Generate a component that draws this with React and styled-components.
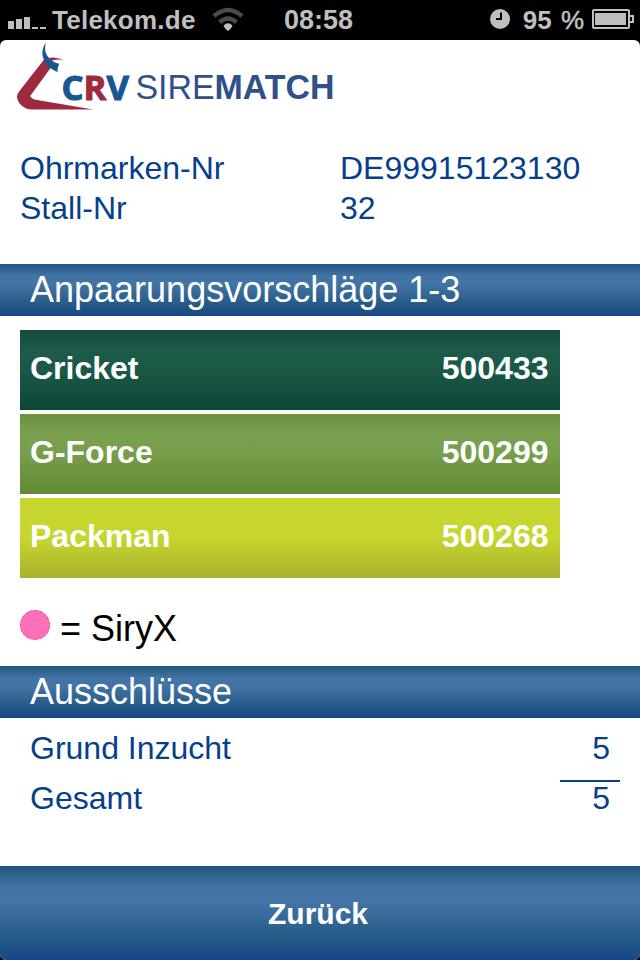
import React from 'react';
import styled, { createGlobalStyle } from 'styled-components';

const GlobalStyle = createGlobalStyle`
  * {
    box-sizing: border-box;
  }

  body {
    margin: 0;
    background: #000;
    font-family: 'Liberation Sans', Arial, sans-serif;
  }
`;

const Screen = styled.div`
  width: 640px;
  height: 960px;
  display: flex;
  flex-direction: column;
  background: #000;
  overflow: hidden;
`;

const StatusBar = styled.div`
  display: grid;
  grid-template-columns: 276px 1fr auto;
  align-items: center;
  height: 40px;
  padding: 0 6px 2px 8px;
  color: #bfbfbf;
  font-weight: bold;
  white-space: nowrap;
`;

const StatusGroup = styled.div`
  display: flex;
  align-items: center;
`;

const Carrier = styled.span`
  margin: 2px 16px 0 6px;
  font-size: 26px;
  letter-spacing: 0.25px;
`;

const Clock = styled.span`
  padding-top: 3px;
  font-size: 27px;
`;

const BatteryLevel = styled.span`
  margin: 3px 8px 0 13px;
  font-size: 26px;
  word-spacing: 2px;
`;

const Percent = styled.span`
  font-weight: normal;
  -webkit-text-stroke: 0.5px #bfbfbf;
`;

const Page = styled.main`
  flex: 1;
  display: flex;
  flex-direction: column;
  background: #fff;
  border-radius: 6px;
  overflow: hidden;
`;

const Header = styled.header`
  height: 108px;
`;

const Logo = styled.svg`
  display: block;
`;

const Details = styled.dl`
  display: grid;
  grid-template-columns: 320px 1fr;
  height: 116px;
  margin: 0;
  padding-left: 20px;
  grid-auto-rows: 40px;
  color: #053f8c;
  font-size: 32px;
  line-height: 40px;

  dt,
  dd {
    margin: 0;
  }
`;

const blueGradient = `linear-gradient(
  #225580 0%,
  #4174a4 22%,
  #4275a5 38%,
  #235784 80%,
  #17468a 100%
)`;

const SectionTitle = styled.h2`
  height: 52px;
  margin: 0;
  padding-left: 30px;
  background: ${blueGradient};
  color: #fff;
  font-size: 36px;
  font-weight: normal;
  line-height: 51px;
`;

const BullList = styled.div`
  display: flex;
  flex-direction: column;
  gap: 4px;
  width: 560px;
  padding: 14px 0 0 20px;
`;

const BullRow = styled.div`
  display: flex;
  justify-content: space-between;
  height: 80px;
  padding: 0 11.5px 0 10px;
  background: linear-gradient(${({ $stops }) => $stops});
  color: #fff;
  font-size: 32px;
  font-weight: bold;
  line-height: 76px;
`;

const Legend = styled.div`
  display: flex;
  align-items: center;
  gap: 10px;
  height: 88px;
  padding: 13px 0 0 20px;
  color: #000;
  font-size: 36px;
`;

const LegendDot = styled.span`
  width: 30px;
  height: 30px;
  margin-bottom: 7px;
  border: 1px dashed #e8488c;
  border-radius: 50%;
  background: #ff70ba;
`;

const Exclusions = styled.div`
  flex: 1;
  padding: 5px 20px 0 30px;
  color: #053f8c;
  font-size: 32px;
`;

const ExclusionRow = styled.div`
  display: flex;
  align-items: flex-end;
  justify-content: space-between;
  height: 50px;
  line-height: 50px;
`;

const Count = styled.span`
  width: 60px;
  height: ${({ $total }) => ($total ? '43px' : '50px')};
  padding-right: 10px;
  border-top: ${({ $total }) => ($total ? '2px solid #053f8c' : 'none')};
  line-height: ${({ $total }) => ($total ? '32px' : '50px')};
  text-align: right;
`;

const BackButton = styled.button`
  height: 94px;
  padding: 2px 4px 0 0;
  border: none;
  background: ${blueGradient};
  color: #fff;
  font-family: inherit;
  font-size: 30px;
  font-weight: bold;
`;

const bulls = [
  { name: 'Cricket', number: '500433', stops: '#124c3c, #1c5b49 25%, #1b5947 50%, #0b4636' },
  { name: 'G-Force', number: '500299', stops: '#6b9240, #7ba050 25%, #789d4c 50%, #608a33' },
  { name: 'Packman', number: '500268', stops: '#c5d52d, #c7d730 25%, #c6d62e 50%, #a8b12d' },
];

const exclusions = [
  { label: 'Grund Inzucht', count: 5 },
  { label: 'Gesamt', count: 5, total: true },
];

function SignalIcon() {
  return (
    <svg width="38" height="20" viewBox="0 0 38 20" fill="#bfbfbf">
      <rect x="0" y="12" width="6" height="8" />
      <rect x="8" y="10" width="6" height="10" />
      <rect x="16" y="8" width="6" height="12" />
      <rect x="24" y="18" width="6" height="2" />
      <rect x="32" y="18" width="6" height="2" />
    </svg>
  );
}

function WifiIcon() {
  return (
    <svg width="32" height="24" viewBox="0 0 32 24" fill="none" strokeWidth="4.4">
      <path d="M2 9.2Q16 -3.2 30 9.2" stroke="#4b4b4b" />
      <path d="M7.6 15.4Q16 7.6 24.4 15.4" stroke="#4b4b4b" />
      <path d="M11.6 18.6Q16 14 20.4 18.6Q20.4 20.4 16.8 23.4Q16 24 15.2 23.4Q11.6 20.4 11.6 18.6Z" fill="#bfbfbf" />
    </svg>
  );
}

function AlarmIcon() {
  return (
    <svg width="20" height="20" viewBox="0 0 20 20">
      <circle cx="10" cy="10" r="10" fill="#bfbfbf" />
      <path d="M11 3.5V10H6" fill="none" stroke="#000" strokeWidth="2" />
    </svg>
  );
}

function BatteryIcon() {
  return (
    <svg width="42" height="20" viewBox="0 0 42 20">
      <rect x="1" y="1" width="36" height="18" rx="1" fill="none" stroke="#bfbfbf" strokeWidth="2" />
      <rect x="3" y="4" width="31" height="12" fill="#bfbfbf" />
      <path d="M38 7H41V13H38" fill="none" stroke="#bfbfbf" strokeWidth="2" />
    </svg>
  );
}

function CrvLogo() {
  return (
    <Logo width="350" height="76" viewBox="0 40 350 76">
      <path
        d="M43.5 60.2C48 57 56 56 63.3 60.4C58 58.8 54 59.4 50 61.5L52 66L30.2 96C31.5 98.5 33.5 99.4 37 100L93.3 109.5H32C24 109.5 17 103 17 96.5C17 94 19 91.5 21 89Z"
        fill="#9e2a40"
      />
      <path
        d="M45.8 42.8C42 48 41.4 54.5 44 60C46.5 65.5 51 69.5 57.6 72C57.4 69 58.2 66 59.3 63.8C54 63 49.8 59.5 47.2 55.8C44.8 52 44.6 47.5 45.8 42.8Z"
        fill="#195793"
      />
      <text
        x="61.5"
        y="100"
        textLength="67.5"
        lengthAdjust="spacingAndGlyphs"
        fontFamily="'Open Sans', 'Noto Sans', sans-serif"
        fontSize="34.5"
        fontWeight="700"
        stroke="#195793"
        strokeWidth="1"
        fill="#195793"
      >
        C<tspan fill="#9e2a40" stroke="#9e2a40">R</tspan>V
      </text>
      <text
        x="135.5"
        y="99.3"
        textLength="199"
        lengthAdjust="spacingAndGlyphs"
        fontFamily="'Liberation Sans', Arial, sans-serif"
        fontSize="35.5"
        fill="#30508a"
      >
        SIRE<tspan fontWeight="bold">MATCH</tspan>
      </text>
    </Logo>
  );
}

function App() {
  return (
    <Screen>
      <GlobalStyle />
      <StatusBar>
        <StatusGroup>
          <SignalIcon />
          <Carrier>Telekom.de</Carrier>
          <WifiIcon />
        </StatusGroup>
        <Clock>08:58</Clock>
        <StatusGroup>
          <AlarmIcon />
          <BatteryLevel>
            95 <Percent>%</Percent>
          </BatteryLevel>
          <BatteryIcon />
        </StatusGroup>
      </StatusBar>
      <Page>
        <Header>
          <CrvLogo />
        </Header>
        <Details>
          <dt>Ohrmarken-Nr</dt>
          <dd>DE99915123130</dd>
          <dt>Stall-Nr</dt>
          <dd>32</dd>
        </Details>
        <SectionTitle>Anpaarungsvorschläge 1-3</SectionTitle>
        <BullList>
          {bulls.map((bull) => (
            <BullRow key={bull.number} $stops={bull.stops}>
              <span>{bull.name}</span>
              <span>{bull.number}</span>
            </BullRow>
          ))}
        </BullList>
        <Legend>
          <LegendDot />
          <span>= SiryX</span>
        </Legend>
        <SectionTitle>Ausschlüsse</SectionTitle>
        <Exclusions>
          {exclusions.map((row) => (
            <ExclusionRow key={row.label}>
              <span>{row.label}</span>
              <Count $total={row.total}>{row.count}</Count>
            </ExclusionRow>
          ))}
        </Exclusions>
        <BackButton>Zurück</BackButton>
      </Page>
    </Screen>
  );
}

export default App;
